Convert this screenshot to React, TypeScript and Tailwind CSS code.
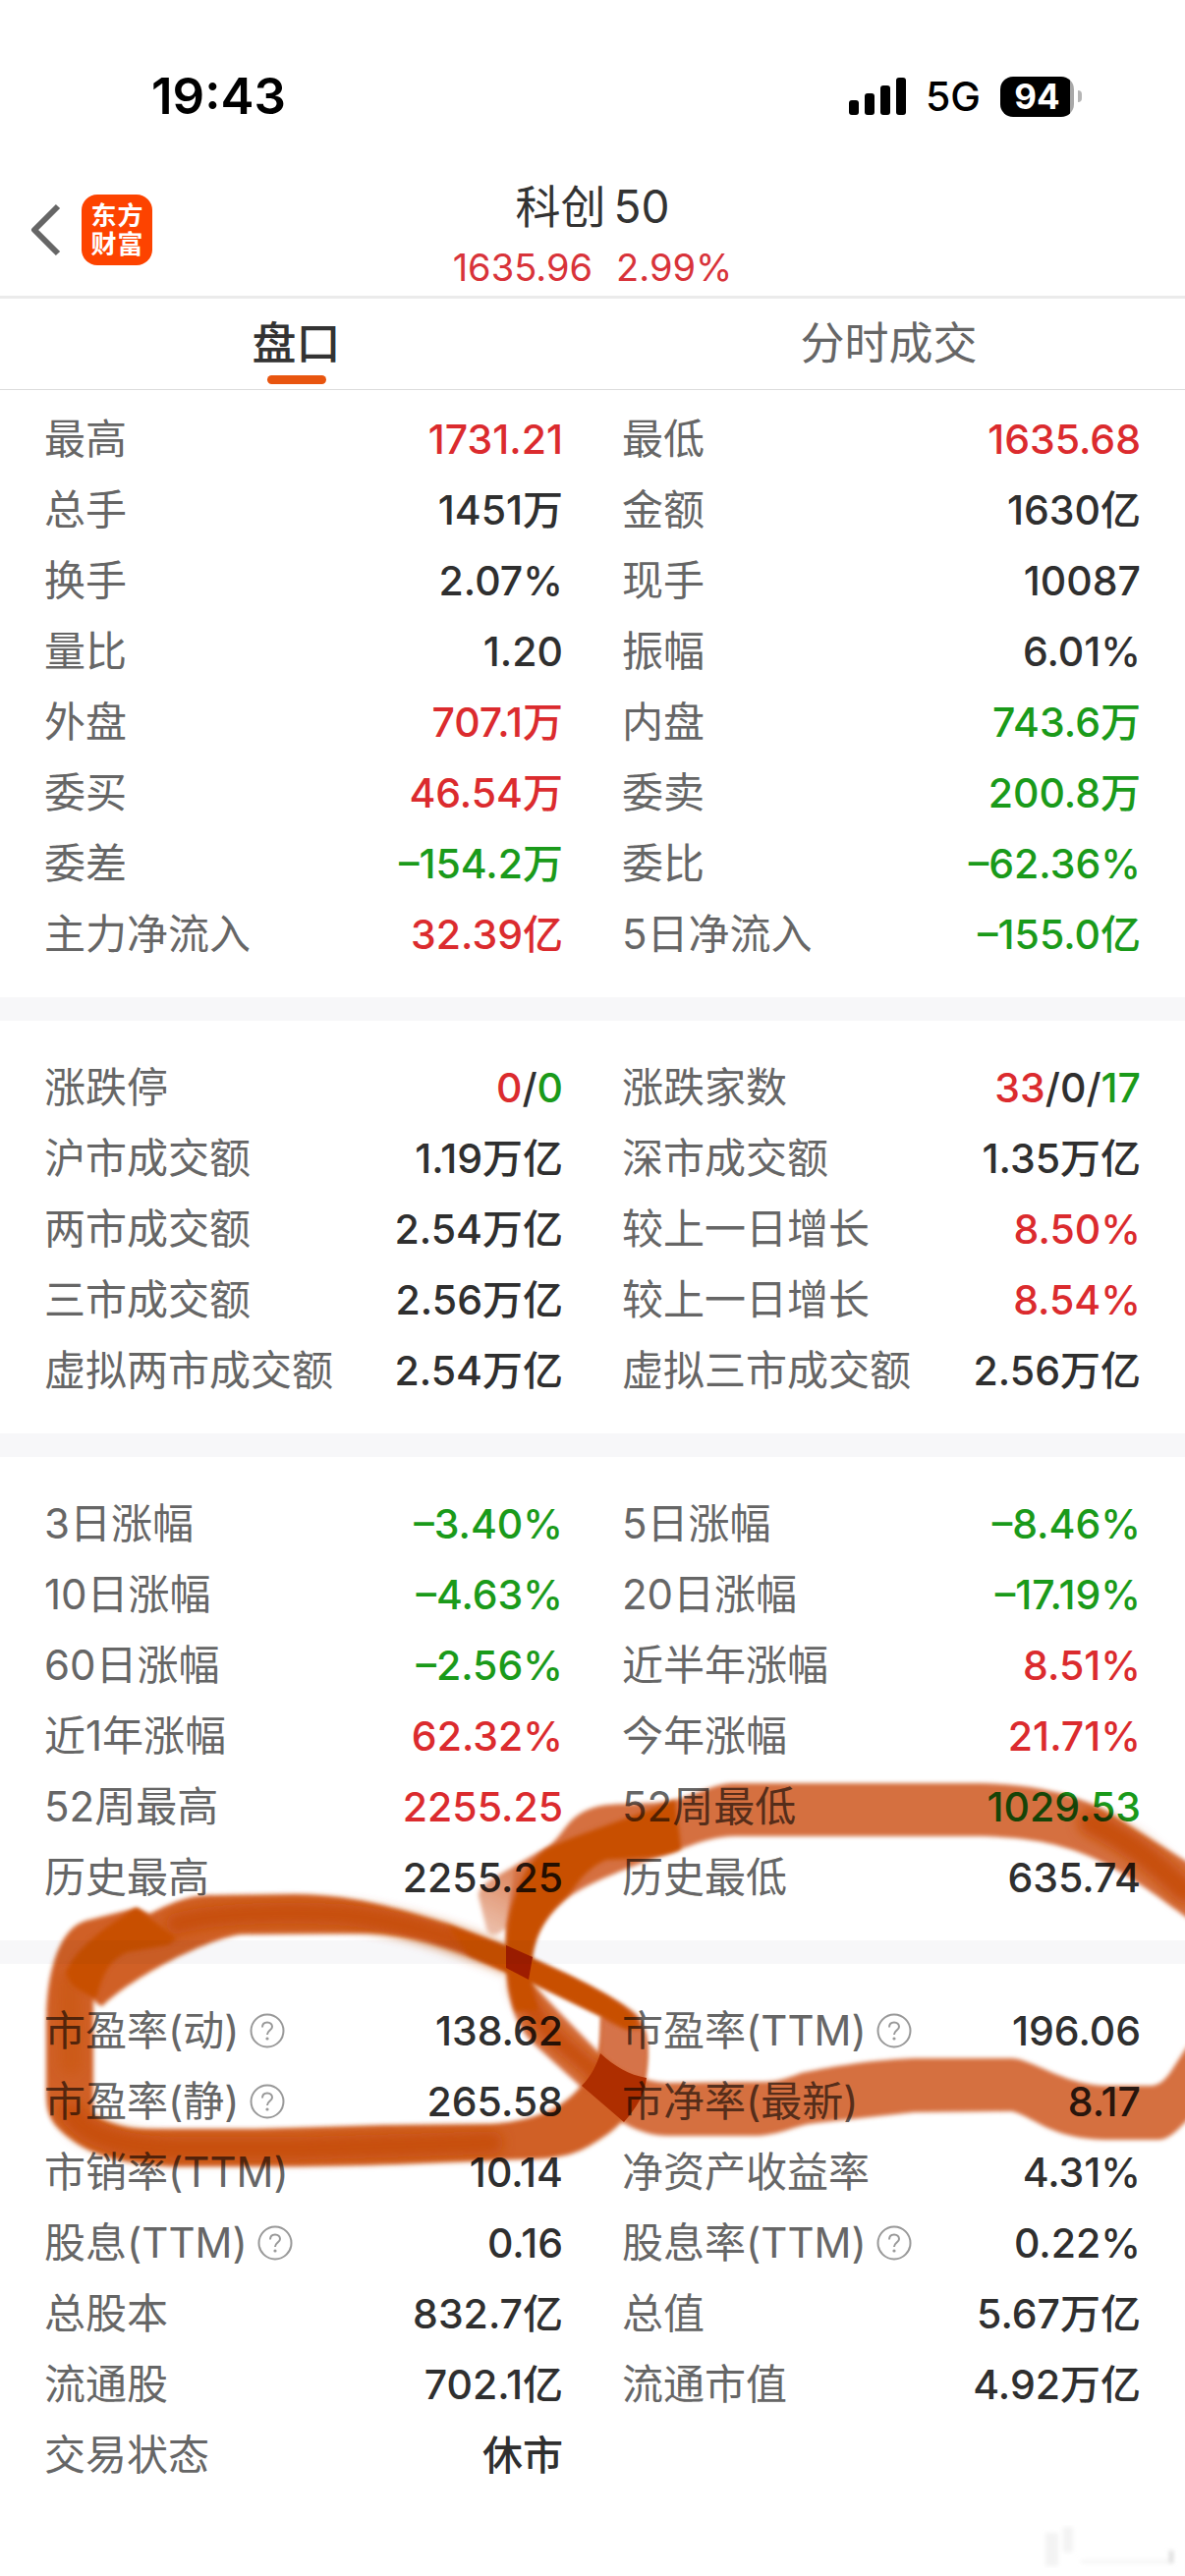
import React, { useState } from "react";

type Tone = "up" | "down" | "flat";
type Part = { text: string; tone: Tone };

interface Quote {
  label: string;
  value: string | Part[];
  tone?: Tone;
  help?: boolean;
}

const TONES: Record<Tone, string> = {
  up: "text-[#db2b2e]",
  down: "text-[#1a9a1a]",
  flat: "text-[#2f2f2f]",
};

const SECTIONS: Quote[][] = [
  [
    { label: "最高", value: "1731.21", tone: "up" },
    { label: "最低", value: "1635.68", tone: "up" },
    { label: "总手", value: "1451万" },
    { label: "金额", value: "1630亿" },
    { label: "换手", value: "2.07%" },
    { label: "现手", value: "10087" },
    { label: "量比", value: "1.20" },
    { label: "振幅", value: "6.01%" },
    { label: "外盘", value: "707.1万", tone: "up" },
    { label: "内盘", value: "743.6万", tone: "down" },
    { label: "委买", value: "46.54万", tone: "up" },
    { label: "委卖", value: "200.8万", tone: "down" },
    { label: "委差", value: "–154.2万", tone: "down" },
    { label: "委比", value: "–62.36%", tone: "down" },
    { label: "主力净流入", value: "32.39亿", tone: "up" },
    { label: "5日净流入", value: "–155.0亿", tone: "down" },
  ],
  [
    {
      label: "涨跌停",
      value: [
        { text: "0", tone: "up" },
        { text: "/", tone: "flat" },
        { text: "0", tone: "down" },
      ],
    },
    {
      label: "涨跌家数",
      value: [
        { text: "33", tone: "up" },
        { text: "/0/", tone: "flat" },
        { text: "17", tone: "down" },
      ],
    },
    { label: "沪市成交额", value: "1.19万亿" },
    { label: "深市成交额", value: "1.35万亿" },
    { label: "两市成交额", value: "2.54万亿" },
    { label: "较上一日增长", value: "8.50%", tone: "up" },
    { label: "三市成交额", value: "2.56万亿" },
    { label: "较上一日增长", value: "8.54%", tone: "up" },
    { label: "虚拟两市成交额", value: "2.54万亿" },
    { label: "虚拟三市成交额", value: "2.56万亿" },
  ],
  [
    { label: "3日涨幅", value: "–3.40%", tone: "down" },
    { label: "5日涨幅", value: "–8.46%", tone: "down" },
    { label: "10日涨幅", value: "–4.63%", tone: "down" },
    { label: "20日涨幅", value: "–17.19%", tone: "down" },
    { label: "60日涨幅", value: "–2.56%", tone: "down" },
    { label: "近半年涨幅", value: "8.51%", tone: "up" },
    { label: "近1年涨幅", value: "62.32%", tone: "up" },
    { label: "今年涨幅", value: "21.71%", tone: "up" },
    { label: "52周最高", value: "2255.25", tone: "up" },
    { label: "52周最低", value: "1029.53", tone: "down" },
    { label: "历史最高", value: "2255.25" },
    { label: "历史最低", value: "635.74" },
  ],
  [
    { label: "市盈率(动)", value: "138.62", help: true },
    { label: "市盈率(TTM)", value: "196.06", help: true },
    { label: "市盈率(静)", value: "265.58", help: true },
    { label: "市净率(最新)", value: "8.17" },
    { label: "市销率(TTM)", value: "10.14" },
    { label: "净资产收益率", value: "4.31%" },
    { label: "股息(TTM)", value: "0.16", help: true },
    { label: "股息率(TTM)", value: "0.22%", help: true },
    { label: "总股本", value: "832.7亿" },
    { label: "总值", value: "5.67万亿" },
    { label: "流通股", value: "702.1亿" },
    { label: "流通市值", value: "4.92万亿" },
    { label: "交易状态", value: "休市" },
  ],
];

function StatusBar() {
  return (
    <div className="flex h-[176px] items-start justify-between pt-[66px] pr-[105px] pl-[154px]">
      <div className="text-[51px] leading-16 font-semibold text-black">19:43</div>
      <div className="flex h-16 items-center">
        <svg width="58" height="38" viewBox="0 0 58 38" className="fill-black">
          <rect x="0" y="23" width="10" height="15" rx="3" />
          <rect x="16" y="16" width="10" height="22" rx="3" />
          <rect x="32" y="8" width="10" height="30" rx="3" />
          <rect x="48" y="0" width="10" height="38" rx="3" />
        </svg>
        <span className="ml-5 text-[41px] leading-16 font-medium text-black">5G</span>
        <div className="ml-5 flex items-center gap-1">
          <div className="flex h-[41px] w-[75px] items-center justify-center rounded-[13px] bg-linear-to-r from-black from-95% to-[#a8a8a8] to-95% text-[35px] leading-10 font-bold text-white">
            94
          </div>
          <div className="h-3 w-1 rounded-r-full bg-[#b5b5b5]" />
        </div>
      </div>
    </div>
  );
}

function Header() {
  return (
    <header className="grid h-32 grid-cols-[1fr_auto_1fr] border-b-3 border-[#ebebeb]">
      <div className="flex items-start gap-5 pt-[22px] pl-[31px]">
        <button type="button" aria-label="返回" className="flex h-[72px] items-center">
          <svg width="32" height="54" viewBox="0 0 32 54" fill="none">
            <path d="M28 3 L4 27 L28 51" stroke="#666" strokeWidth="6" strokeLinejoin="round" />
          </svg>
        </button>
        <a
          href="#"
          className="grid size-[72px] grid-cols-[27px_27px] content-center justify-center rounded-2xl bg-[#fd4300] text-center text-[26px] leading-[29px] font-bold text-white"
        >
          <span>东</span>
          <span>方</span>
          <span>财</span>
          <span>富</span>
        </a>
      </div>
      <div className="pt-0.5">
        <h1 className="flex justify-center gap-2 text-[46px] leading-16 text-[#333]">
          <span>科创</span>
          <span>50</span>
        </h1>
        <p className="flex gap-6 text-[38px] leading-15 text-[#d8333a]">
          <span>1635.96</span>
          <span>2.99%</span>
        </p>
      </div>
    </header>
  );
}

function Tabs() {
  const [active, setActive] = useState("盘口");
  return (
    <nav className="grid grid-cols-2 border-b border-[#dcdcdc]">
      {["盘口", "分时成交"].map((tab) => (
        <button
          key={tab}
          type="button"
          onClick={() => setActive(tab)}
          className={`flex h-[92px] cursor-pointer flex-col items-center pt-3.5 text-[45px] leading-16 ${
            tab === active ? "font-medium text-[#333]" : "text-[#666]"
          }`}
        >
          {tab}
          {tab === active && <span className="h-[9px] w-15 rounded-full bg-[#e8550f]" />}
        </button>
      ))}
    </nav>
  );
}

function HelpIcon() {
  return (
    <svg width="36" height="36" viewBox="0 0 36 36" fill="none" stroke="#999" strokeWidth="2">
      <circle cx="18" cy="18" r="16.5" />
      <path d="M13 14.5 C13 11.5 15 9.5 18 9.5 C21 9.5 23 11.4 23 14 C23 17.5 18 17.8 18 22" />
      <circle cx="18" cy="26" r="1.6" fill="#999" stroke="none" />
    </svg>
  );
}

function QuoteRow({ label, value, tone = "flat", help }: Quote) {
  return (
    <div className="flex h-18 items-center justify-between whitespace-nowrap">
      <dt className="flex items-center gap-2.5 text-[#666]">
        {label}
        {help && (
          <button type="button" aria-label={`${label}说明`}>
            <HelpIcon />
          </button>
        )}
      </dt>
      <dd className={`text-[41px] font-medium ${TONES[tone]}`}>
        {typeof value === "string"
          ? value
          : value.map((part, i) => (
              <span key={i} className={TONES[part.tone]}>
                {part.text}
              </span>
            ))}
      </dd>
    </div>
  );
}

// Marker loops drawn by hand over the valuation figures
function MarkerLoops() {
  return (
    <svg
      viewBox="0 0 1206 2622"
      className="pointer-events-none absolute top-0 left-0 w-full mix-blend-multiply"
    >
      <defs>
        <filter id="soft" x="-5%" y="-5%" width="110%" height="110%">
          <feGaussianBlur stdDeviation="2" />
        </filter>
        <filter id="core" x="-10%" y="-30%" width="120%" height="160%">
          <feGaussianBlur stdDeviation="6" />
        </filter>
        <linearGradient id="tail" x1="0" y1="1" x2="0.5" y2="0">
          <stop offset="0" stopColor="#d67142" stopOpacity="0.4" />
          <stop offset="1" stopColor="#d67142" />
        </linearGradient>
      </defs>

      {/* right loop */}
      <g filter="url(#soft)">
        <path
          fill="#d57041"
          d="M1216 1900 L1149 1858 C1120 1838 1080 1815 988 1815 L745 1815 C725 1816 705 1828 687 1832 C660 1838 625 1834 607 1839 C575 1848 575 1868 557 1880 L524 1900 L515 1962 L515 1987 C515 2035 524 2062 543 2080 L590 2123 L633 2160 C650 2170 665 2174 680 2174 L770 2174 C795 2173 810 2163 830 2161 L930 2150 L1030 2149 C1055 2156 1070 2178 1130 2178 L1180 2178 C1192 2177 1200 2166 1216 2150 L1216 2074 C1195 2097 1190 2122 1172 2123 L1122 2123 C1080 2120 1050 2096 1030 2095 L930 2095 C880 2097 840 2105 815 2110 C795 2118 785 2119 776 2119 L680 2120 C645 2118 625 2103 610 2090 L540 2018 C536 1975 555 1950 577 1932 C600 1915 660 1893 693 1882 C715 1874 730 1869 749 1869 L988 1869 C1090 1869 1130 1893 1216 1958 Z"
        />
        <path
          fill="url(#tail)"
          d="M557 1880 L517 1903 C500 1913 487 1919 487 1930 L495 1963 C498 1973 508 1970 515 1962 L540 1940 L575 1890 Z"
        />
      </g>
      {/* left loop */}
      <g filter="url(#soft)">
        <path
          fill="#d06026"
          fillRule="evenodd"
          d="M139 1942 L152 1948 C180 1934 195 1929 217 1929 L300 1928 C365 1928 420 1948 455 1958 L516 1982 L577 2010 C610 2026 645 2045 650 2053 C660 2070 660 2090 657 2113 C652 2140 635 2163 610 2178 C590 2191 575 2198 530 2198 C440 2201 400 2204 304 2205 L173 2205 C120 2202 90 2192 69 2175 C50 2160 47 2150 47 2130 L47 2060 C47 2020 55 1965 87 1955 Z
             M95 2033 L95 2153 C115 2163 130 2167 150 2167 L260 2167 L390 2163 L499 2162 C550 2158 575 2144 594 2120 C608 2100 612 2085 612 2052 L540 2017 L477 1990 C430 1973 400 1968 369 1968 L245 1969 C210 1974 135 2012 104 2042 C98 2040 96 2037 95 2033 Z"
        />
      </g>

      {/* denser ink along the middle of each stroke */}
      <g fill="none" stroke="#c75008" strokeLinecap="round" filter="url(#core)">
        <path strokeWidth="22" d="M180 1958 C220 1946 300 1946 350 1949 C420 1956 480 1980 520 1996" />
        <path strokeWidth="24" d="M72 2150 C85 2175 130 2186 180 2187 L300 2187 L500 2181" />
        <path strokeWidth="24" d="M70 2020 L72 2100" opacity="0.35" />
        <path strokeWidth="26" d="M1110 1855 C1150 1875 1175 1895 1206 1925" />
        <path strokeWidth="20" d="M530 2020 C545 2065 580 2085 606 2110" />
      </g>
      <path
        filter="url(#soft)"
        fill="#d5734a"
        d="M612 2052 C625 2062 640 2068 656 2066 C660 2082 659 2100 656 2116 C640 2114 622 2101 611 2090 Z"
      />

      {/* overlapping passes */}
      <g fill="#c85000" filter="url(#soft)">
        <path d="M139 1942 L180 1973 L171 1980 L130 1987 C110 1995 104 2012 98 2034 C82 2028 70 2020 67 2008 C75 1985 105 1962 139 1942 Z" />
        <path d="M455 1960 L516 1982 L577 2010 C610 2026 645 2045 650 2062 L638 2066 L612 2052 L540 2017 L477 1990 Z" />
        <path d="M687 1832 C689 1850 692 1866 693 1882 C680 1890 645 1892 617 1893 C590 1905 585 1925 575 1932 C550 1955 540 1975 540 2018 L548 2046 L525 2047 C513 2010 514 1965 520 1944 C528 1915 540 1890 560 1880 C600 1862 650 1848 687 1832 Z" />
      </g>
      <g fill="#9e1c00">
        <path d="M515 1980 L542 1992 L538 2015 L515 2003 Z" />
        <path
          fill="#ae2e00"
          d="M611 2090 C625 2103 640 2112 658 2115 C656 2132 648 2145 635 2160 L592 2123 C602 2113 607 2102 611 2090 Z"
        />
      </g>

      {/* faint smudge in the bottom corner */}
      <g fill="#f3f3f3" filter="url(#soft)">
        <rect x="1064" y="2578" width="13" height="34" />
        <rect x="1082" y="2572" width="10" height="26" />
        <rect x="1100" y="2606" width="90" height="3" />
        <rect x="1190" y="2596" width="4" height="13" fill="#d8d8d8" />
      </g>
    </svg>
  );
}

export default function App() {
  return (
    <div className="relative min-h-screen bg-white pb-[59px] font-[Inter,'Noto_Sans_CJK_SC',sans-serif]">
      <StatusBar />
      <Header />
      <Tabs />
      <main className="-mt-[18px] text-[42px] leading-15">
        {SECTIONS.map((quotes, i) => (
          <React.Fragment key={i}>
            {i > 0 && <div className="h-6 bg-[#f7f7f9]" />}
            <dl className="grid grid-cols-2 gap-x-15 px-[45px] pt-8 pb-7">
              {quotes.map((quote, j) => (
                <QuoteRow key={j} {...quote} />
              ))}
            </dl>
          </React.Fragment>
        ))}
      </main>
      <MarkerLoops />
    </div>
  );
}
